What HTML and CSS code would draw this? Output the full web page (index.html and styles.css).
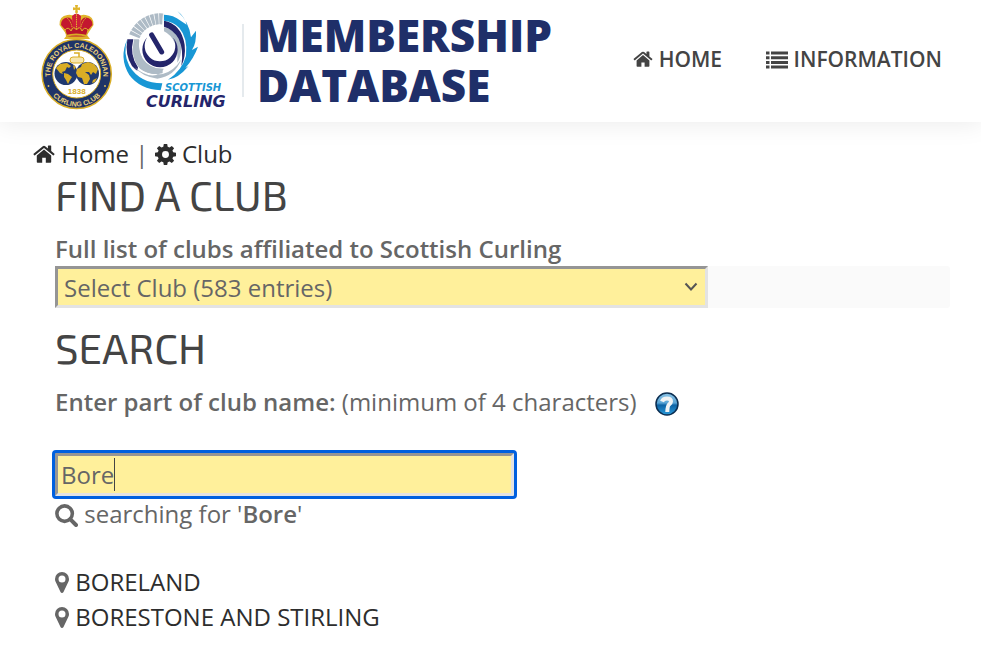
FILE: index.html
```html
<!DOCTYPE html>
<html lang="en">
<head>
    <meta charset="UTF-8">
    <meta name="viewport" content="width=device-width, initial-scale=1.0">
    <title>Membership Database</title>
    <link rel="stylesheet" href="styles.css">
</head>
<body>
    <!-- shared icons -->
    <svg class="sprite" aria-hidden="true">
        <symbol id="icon-home" viewBox="0 0 22 18">
            <path d="M11 4.600 3.800 10.600V17q0 .8.8.8h4.600v-5h3.600v5h4.600q.8 0 .8-.8v-6.400z"/>
            <path d="M21.400 8.800 18.200 6.100V1q0-.5-.5-.5h-2.300q-.5 0-.5.5v2.500L12.200 1.200Q11 .3 9.800 1.200L.6 8.800q-.4.3 0 .7l.6.8q.4.3.8 0L11 2.900l9 7.400q.4.300.8 0l.6-.8q.400-.4 0-.7z"/>
        </symbol>
        <symbol id="icon-list" viewBox="0 0 22 18">
            <path d="M0 .5h3.500v3H0zM5 .5h17v3H5zM0 5.200h3.500v3H0zM5 5.200h17v3H5zM0 9.900h3.500v3H0zM5 9.900h17v3H5zM0 14.600h3.500v3H0zM5 14.600h17v3H5z"/>
        </symbol>
        <symbol id="icon-cog" viewBox="0 0 20 20">
            <path fill-rule="evenodd" d="M8.400 0h3.200l.5 2.700 1.700.7L16 1.800 18.200 4l-1.600 2.200.7 1.700 2.700.5v3.200l-2.700.5-.7 1.700 1.600 2.200-2.200 2.200-2.200-1.600-1.700.7-.5 2.700H8.400l-.5-2.700-1.700-.7L4 18.200 1.800 16l1.600-2.200-.7-1.700L0 11.600V8.400l2.700-.5.7-1.700L1.800 4 4 1.800l2.200 1.600 1.700-.7zM10 6.700a3.300 3.300 0 1 0 0 6.600 3.300 3.300 0 0 0 0-6.600z"/>
        </symbol>
        <symbol id="icon-search" viewBox="0 0 22 22">
            <circle cx="9.200" cy="9.200" r="7.400" fill="none" stroke="currentColor" stroke-width="3.400"/>
            <path d="m14.500 14.500 5.600 5.600" fill="none" stroke="currentColor" stroke-width="3.800" stroke-linecap="round"/>
        </symbol>
        <symbol id="icon-marker" viewBox="0 0 14 21">
            <path fill-rule="evenodd" d="M7 0a7 7 0 0 1 7 7q0 1.500-.5 2.600L8.500 20q-.5.900-1.500.900T5.500 20L.5 9.600Q0 8.500 0 7a7 7 0 0 1 7-7zm0 3.500a3.500 3.500 0 1 0 0 7 3.500 3.500 0 0 0 0-7z"/>
        </symbol>
    </svg>

    <header class="header">
        <a href="#" class="brand">
            <svg class="logo" viewBox="40 0 205 114" role="img" aria-label="Royal Caledonian Curling Club and Scottish Curling">
                <defs>
                    <path id="arc-top" d="M51.800 83.100A26.500 26.500 0 1 1 101.600 83.100"/>
                    <path id="arc-bottom" d="M45.600 82A32 32 0 0 0 107.800 82"/>
                </defs>
                <!-- crown -->
                <g fill="#e0b52c">
                    <path d="M75 5h3l-.5 2.800 2.500-.5v3l-2.500-.5.5 3h-3l.5-3-2.500.5v-3l2.500.5z"/>
                    <path d="M67 35 59.500 25q-.5-9 8-10 5-1 9 3 4-4 9-3 8.500 1 8 10L87 35l3 4H64z"/>
                </g>
                <path d="M61 25q0-7 6.500-7.500 4.500 0 5.500 5.500l.5 8h-7zM92.500 25q0-7-6.500-7.500-4.500 0-5.500 5.500l-.5 8h7z" fill="#c3172f"/>
                <path d="M72 16q4.500-5 9 0l-1 15h-7z" fill="#cf2038"/>
                <path d="M76.500 12v22M67 18q5 4 5.500 13M86 18q-5 4-5.500 13" fill="none" stroke="#e0b52c" stroke-dasharray="1.500 .8"/>
                <path d="M65 30q3.500-4 6 1 2.500-6 5.500-1 3-5 5.500 1 2.500-5 6-1l-2 7H67z" fill="#b8152b" stroke="#e0b52c"/>
                <path d="M66 36q10-3 21 0" fill="none" stroke="#d9ad25" stroke-width="2"/>
                <!-- badge ring -->
                <circle cx="76.700" cy="74" r="34.600" fill="#1f3468" stroke="#d9ad25" stroke-width="1.500"/>
                <circle cx="76.700" cy="74" r="24" fill="#fff" stroke="#d9ad25"/>
                <text class="badge-text"><textPath href="#arc-top" startOffset="50%" text-anchor="middle">THE ROYAL CALEDONIAN</textPath></text>
                <text class="badge-text"><textPath href="#arc-bottom" startOffset="50%" text-anchor="middle">CURLING CLUB</textPath></text>
                <circle cx="48.500" cy="86" r=".9" fill="#e8c65a"/>
                <circle cx="105" cy="86" r=".9" fill="#e8c65a"/>
                <!-- curling stone and hemispheres -->
                <path d="M74 53h5v4" fill="none" stroke="#d9ad25" stroke-width="1.500"/>
                <rect x="70" y="57" width="14" height="6" rx="3" fill="#f6e6ad" stroke="#d9ad25"/>
                <circle cx="66" cy="73.500" r="11.500" fill="#20396f"/>
                <circle cx="87.500" cy="73.500" r="11.500" fill="#20396f"/>
                <g fill="#d9ad25">
                    <path d="m56 68 4-4 7-1 4 3-2 2-2-1-2 4-3 1 1 2-3-1zM64 73l4 1 4 3-2 3-2 4-2-4-2-3zM73 65l3 2-2 3z"/>
                    <path d="m77 69 4-2 1-3 6-2 6 2 4 5-2 5-3-2-2 3-2-3-4 0 4 3 1 4-3 5-3 0-2-6-4-1-2-4zM93 80l4-2-2 4-3 1z"/>
                </g>
                <text x="76.700" y="94" text-anchor="middle" class="badge-year">1838</text>

                <!-- fan, broken ring and stone -->
                <g transform="translate(40) scale(.3333)">
                    <path d="M283 109A83 83 0 0 1 370 57" fill="none" stroke="#aebbc6" stroke-width="33" stroke-dasharray="10 2"/>
                    <path d="M262 118Q248 160 268 198 300 250 367 250L362 271Q300 268 268 225 236 174 262 118z" fill="#1897d5"/>
                    <path d="M262 118Q254 165 276 198 284 207 292 212L294 202Q268 165 280 118z" fill="#24256b"/>
                    <path d="M282 118Q272 170 296 200 320 226 368 222 402 214 424 178 405 229 352 236 306 230 284 202 330 240 360 220L372 206Q330 208 308 176 293 150 297 118z" fill="#aebbc6"/>
                    <path d="M284 120Q270 172 300 206 330 228 368 220V206Q330 208 308 176 293 150 298 120z" fill="#aebbc6"/>
                    <path d="M372 82Q418 92 424 140 424 170 412 188 416 116 372 94z" fill="#aebbc6"/>
                    <path d="M372 62Q424 72 434 134 438 170 424 198 432 150 416 116 400 88 372 80z" fill="#24256b"/>
                    <path d="M372 44Q400 44 422 62L440 74Q434 50 412 33 448 66 453 112L468 92Q470 128 456 150L474 140Q462 174 436 204L446 198Q414 236 384 239 426 212 438 168 444 114 418 84 400 64 372 62z" fill="#1897d5"/>
                    <path d="M322 112A53 53 0 1 0 398 112 46 46 0 1 1 322 112z" fill="#24256b"/>
                    <path d="M335 105l30 51" stroke="#24256b" stroke-width="15" stroke-linecap="round"/>
                </g>
                <text x="165" y="91" class="logo-scottish">SCOTTISH</text>
                <text x="146" y="107" class="logo-curling">CURLING</text>
                <path d="M243 24v73" stroke="#cbd5dc"/>
            </svg>
            <span class="brand-name">MEMBERSHIP<br>DATABASE</span>
        </a>
        <nav class="nav">
            <a href="#"><svg class="icon icon-home"><use href="#icon-home"/></svg> HOME</a>
            <a href="#"><svg class="icon icon-list"><use href="#icon-list"/></svg> INFORMATION</a>
        </nav>
    </header>

    <main>
        <div class="breadcrumb">
            <a href="#"><svg class="icon icon-home"><use href="#icon-home"/></svg> Home</a>
            <span>|</span>
            <a href="#"><svg class="icon icon-cog"><use href="#icon-cog"/></svg> Club</a>
        </div>

        <div class="content">
            <h1>FIND A CLUB</h1>
            <label class="list-label" for="club">Full list of clubs affiliated to Scottish Curling</label>
            <div class="select-row">
                <select id="club">
                    <option>Select Club (583 entries)</option>
                </select>
            </div>

            <h2>SEARCH</h2>
            <div class="search-label">
                <label for="search"><b>Enter part of club name:</b> (minimum of 4 characters)</label>
                <button type="button" class="help" aria-label="Help">
                    <svg viewBox="0 0 24 24">
                        <defs>
                            <linearGradient id="help-fill" x1="0" y1="0" x2="0" y2="1">
                                <stop offset="0" stop-color="#8cc4e6"/>
                                <stop offset=".45" stop-color="#5aa5d6"/>
                                <stop offset=".55" stop-color="#0d63a5"/>
                                <stop offset="1" stop-color="#2a9ada"/>
                            </linearGradient>
                        </defs>
                        <circle cx="12" cy="12" r="11" fill="url(#help-fill)" stroke="#0b2d50" stroke-width="1.500"/>
                        <path d="M7 9.500Q8 6.500 12 6.500q4 0 4 3 0 1.500-1.800 2.800Q12.500 13.500 12.300 20" fill="none" stroke="#f1f3f4" stroke-width="4"/>
                    </svg>
                </button>
            </div>
            <div class="search-box">
                <input type="text" id="search" value="Bore" autocomplete="off">
            </div>
            <div class="status"><svg class="icon icon-search"><use href="#icon-search"/></svg> searching for '<b>Bore</b>'</div>

            <ul class="results">
                <li><svg class="icon icon-marker"><use href="#icon-marker"/></svg> <a href="#">BORELAND</a></li>
                <li><svg class="icon icon-marker"><use href="#icon-marker"/></svg> <a href="#">BORESTONE AND STIRLING</a></li>
            </ul>
        </div>
    </main>
</body>
</html>
```

FILE: styles.css
```css
* {
    box-sizing: border-box;
}
body {
    margin: 0;
    background: #fff;
    color: #666;
    font-family: "Open Sans", "Noto Sans", sans-serif;
    font-size: 24px;
    line-height: 35px;
}
a {
    color: #2d2d2d;
    text-decoration: none;
}
b {
    font-weight: 600;
}
.sprite {
    display: block;
    width: 0;
    height: 0;
}
.icon {
    fill: currentColor;
    vertical-align: -2px;
}
.icon-home {
    width: 22px;
    height: 18px;
    vertical-align: 0;
}
.icon-list {
    width: 22px;
    height: 18px;
}
.icon-cog {
    width: 21px;
    height: 21px;
}
.icon-search {
    width: 23px;
    height: 23px;
    vertical-align: -4px;
}
.icon-marker {
    width: 14px;
    height: 21px;
}

/* header */
.header {
    display: flex;
    align-items: center;
    justify-content: space-between;
    padding: 0 39px 8px 40px;
    box-shadow: 0 0 24px 2px rgba(0, 0, 0, 0.08);
}
.brand {
    display: flex;
    gap: 12px;
}
.logo {
    width: 205px;
    height: 114px;
}
.brand-name {
    padding-top: 10px;
    color: #1f2f69;
    font-size: 44px;
    font-weight: 800;
    line-height: 50px;
}
.badge-text {
    fill: #ecd078;
    font: bold 7px "Liberation Sans", sans-serif;
}
.badge-year {
    fill: #d9ad25;
    font: bold 8px "Liberation Sans", sans-serif;
}
.logo-scottish {
    fill: #1897d5;
    font: italic bold 10px "DejaVu Sans", sans-serif;
}
.logo-curling {
    fill: #24256b;
    font: italic bold 16px "DejaVu Sans", sans-serif;
}
.nav {
    display: flex;
    gap: 44px;
    padding-top: 4px;
}
.nav a {
    color: #444;
    font-size: 21px;
    font-weight: 600;
    white-space: nowrap;
}
.nav .icon-home {
    width: 20px;
    height: 16px;
}

/* page */
.breadcrumb {
    padding: 14px 33px 0;
}
.content {
    padding: 0 31px 24px 55px;
}
h1, h2 {
    margin: 0;
    color: #444;
    font-family: "Exo 2", Roboto, sans-serif;
    font-size: 42px;
    font-weight: 400;
    line-height: 46px;
}
.list-label {
    display: block;
    margin-top: 14px;
    font-weight: 600;
}
.select-row {
    margin-bottom: 16px;
    border-radius: 3px;
    background: #fafafa;
}
select, input {
    display: block;
    border: 3px solid #e3e3e3;
    border-color: #959595 #e3e3e3 #e3e3e3 #959595;
    border-radius: 0;
    background: #fff09b;
    color: #666;
    font: inherit;
}
select {
    width: 73%;
    height: 42px;
    padding: 0 12px 0 6px;
    appearance: none;
    background: #fff09b url("data:image/svg+xml,%3Csvg xmlns='http://www.w3.org/2000/svg' width='14' height='10'%3E%3Cpath d='M1.500 1.500 7 7.500l5.500-6' fill='none' stroke='%23555' stroke-width='2'/%3E%3C/svg%3E") no-repeat right 7px center;
}
.search-label {
    display: flex;
    align-items: center;
    gap: 18px;
    margin: 14px 0 34px;
}
.help {
    width: 24px;
    height: 24px;
    margin-top: 4px;
    padding: 0;
    border: 0;
    background: none;
}
.help svg {
    display: block;
}
input {
    width: 459px;
    max-width: 100%;
    height: 43px;
    padding: 0 3px;
    /* text cursor */
    background: #fff09b linear-gradient(#444, #444) no-repeat 56px center / 1px 33px;
    caret-color: transparent;
    outline: 3px solid #0060df;
    border-radius: 1px;
}
.results {
    margin: 33px 0 0;
    padding: 0;
    list-style: none;
}
```
